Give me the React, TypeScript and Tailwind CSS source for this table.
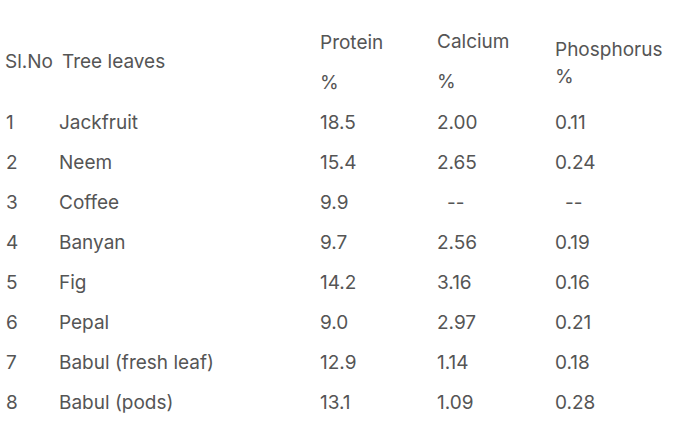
import React from "react";

const rows = [
  ["1", "Jackfruit", "18.5", "2.00", "0.11"],
  ["2", "Neem", "15.4", "2.65", "0.24"],
  ["3", "Coffee", "9.9", "--", "--"],
  ["4", "Banyan", "9.7", "2.56", "0.19"],
  ["5", "Fig", "14.2", "3.16", "0.16"],
  ["6", "Pepal", "9.0", "2.97", "0.21"],
  ["7", "Babul (fresh leaf)", "12.9", "1.14", "0.18"],
  ["8", "Babul (pods)", "13.1", "1.09", "0.28"],
];

export default function App() {
  return (
    <div
      className="w-[700px] h-[446px] bg-white text-[#555555] text-[19px] overflow-hidden"
      style={{ fontFamily: "Inter, 'Noto Sans', sans-serif" }}
    >
      <div className="pt-[23px] pl-[6px] grid grid-cols-[53px_261px_117px_118px_1fr]">
        <div className="h-[80px] flex items-center -mt-[1px] -ml-[1px]">Sl.No</div>
        <div className="h-[80px] flex items-center pl-[3px] -mt-[1px]">Tree leaves</div>
        <div className="h-[80px] flex flex-col leading-[40px]">
          <div>Protein</div>
          <div>%</div>
        </div>
        <div className="h-[80px] flex flex-col leading-[40px] -mt-[1px]">
          <div>Calcium</div>
          <div>%</div>
        </div>
        <div className="h-[80px] flex flex-col justify-center leading-[27px]">
          <div>Phosphorus</div>
          <div>%</div>
        </div>
        {rows.map((r) => (
          <React.Fragment key={r[0]}>
            <div className="h-[40px] leading-[40px]">{r[0]}</div>
            <div className="h-[40px] leading-[40px]">{r[1]}</div>
            <div className="h-[40px] leading-[40px]">{r[2]}</div>
            <div className={"h-[40px] leading-[40px] " + (r[3] === "--" ? "pl-[10px]" : "")}>{r[3]}</div>
            <div className={"h-[40px] leading-[40px] " + (r[4] === "--" ? "pl-[10px]" : "")}>{r[4]}</div>
          </React.Fragment>
        ))}
      </div>
    </div>
  );
}
